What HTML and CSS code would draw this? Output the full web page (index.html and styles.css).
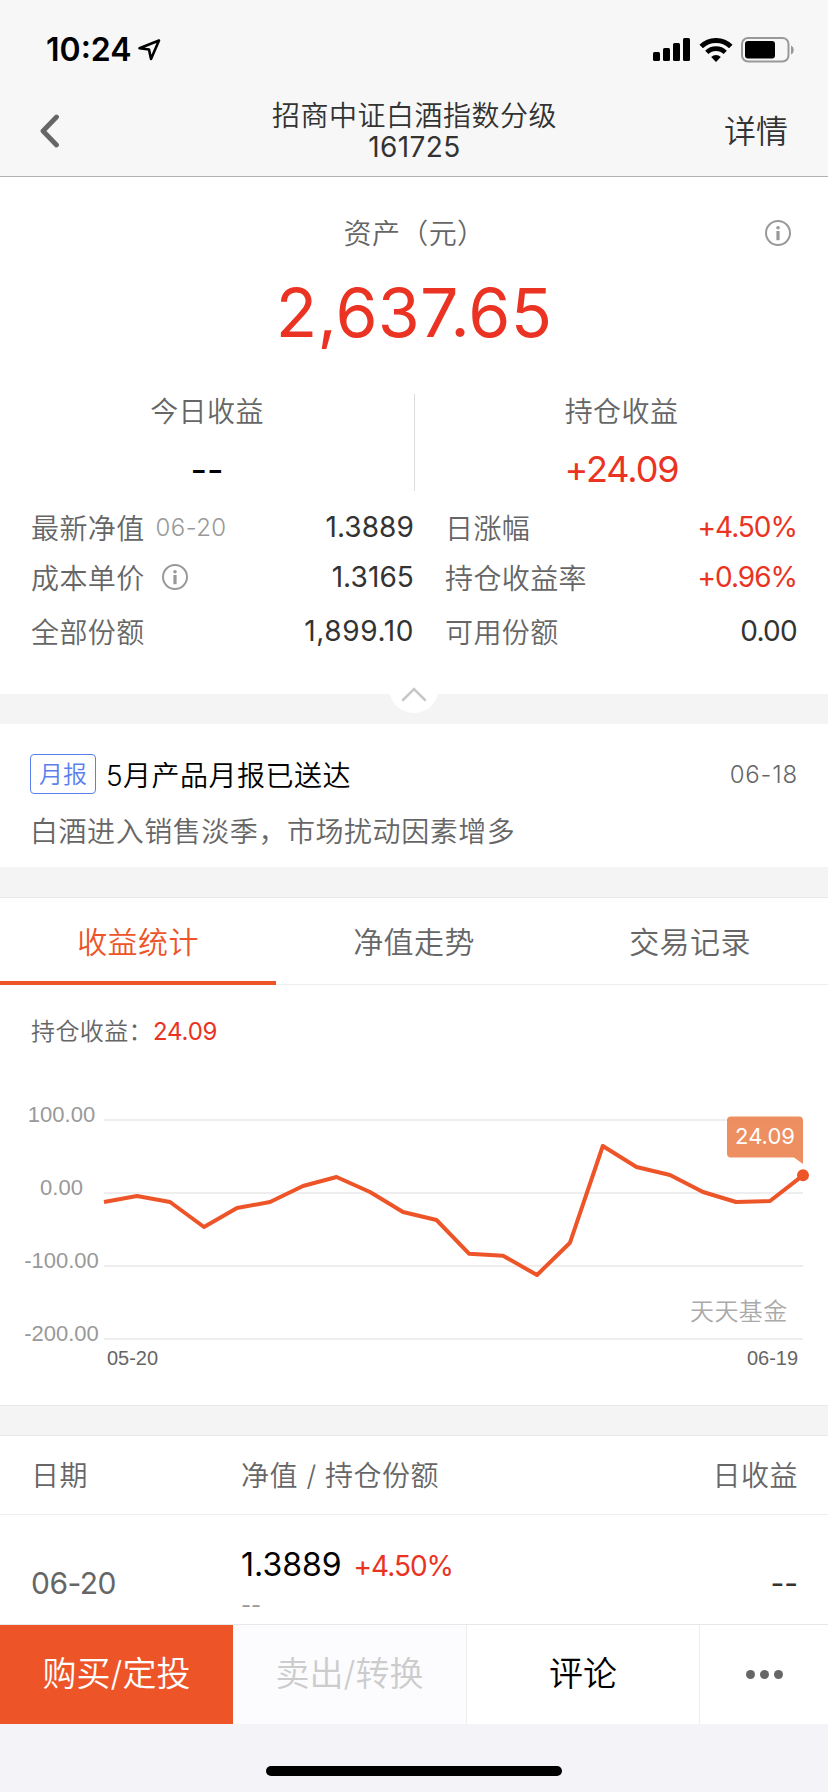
FILE: index.html
```html
<!DOCTYPE html>
<html lang="zh-CN">
<head>
    <meta charset="UTF-8">
    <meta name="viewport" content="width=device-width, initial-scale=1.0">
    <title>招商中证白酒指数分级</title>
    <link rel="stylesheet" href="styles.css">
</head>
<body>
    <div id="status-bar">
        <div class="time">10:24</div>
        <svg class="location" width="24" height="24" viewBox="0 0 24 24">
            <path d="M22 2.5 L2.5 10.2 L12 11.5 L14 21 Z" fill="none" stroke="#000" stroke-width="2.6" stroke-linejoin="round"/>
        </svg>
        <div class="status-icons">
            <svg width="37" height="24" viewBox="0 0 37 24">
                <rect x="0" y="14" width="7" height="9" rx="1.5"/>
                <rect x="10" y="10" width="7" height="13" rx="1.5"/>
                <rect x="20" y="5" width="7" height="18" rx="1.5"/>
                <rect x="30" y="0" width="7" height="23" rx="1.5"/>
            </svg>
            <svg class="wifi" width="34" height="24" viewBox="0 0 34 24">
                <path d="M2.2 8.6 A21 21 0 0 1 31.8 8.6" fill="none" stroke="#000" stroke-width="5"/>
                <path d="M7.8 14.4 A13 13 0 0 1 26.2 14.4" fill="none" stroke="#000" stroke-width="4.6"/>
                <path d="M12.2 19 A6.8 6.8 0 0 1 21.8 19 L17 24 Z"/>
            </svg>
            <svg class="battery" width="54" height="26" viewBox="0 0 54 26">
                <rect x="1" y="1" width="46.5" height="23.5" rx="6" fill="none" stroke="#999" stroke-width="2"/>
                <rect x="4" y="4" width="30" height="17.5" rx="3"/>
                <path d="M50 8.5 A5 5 0 0 1 50 17.5 Z" fill="#999"/>
            </svg>
        </div>
    </div>

    <div id="header">
        <svg class="back" width="20" height="36" viewBox="0 0 20 36">
            <path d="M16.5 4 L3 18 L16.5 32" fill="none" stroke="#666" stroke-width="4.8" stroke-linecap="round" stroke-linejoin="round"/>
        </svg>
        <div class="title">
            <div class="fund-name">招商中证白酒指数分级</div>
            <div class="fund-code">161725</div>
        </div>
        <div class="detail">详情</div>
    </div>

    <div id="assets">
        <div class="assets-label">资产（元）
            <svg class="info" width="26" height="26" viewBox="0 0 26 26">
                <circle cx="13" cy="13" r="12" fill="none" stroke="#999" stroke-width="2"/>
                <circle cx="13" cy="7.8" r="1.8" fill="#999"/>
                <rect x="11.4" y="11" width="3.2" height="9.2" fill="#999"/>
            </svg>
        </div>
        <div class="assets-total">2,637.65</div>
        <div class="profit">
            <div class="profit-item">
                <div class="profit-label">今日收益</div>
                <div class="profit-value dash">--</div>
            </div>
            <div class="profit-item">
                <div class="profit-label">持仓收益</div>
                <div class="profit-value red">+24.09</div>
            </div>
        </div>
        <div class="info-grid">
            <div class="cell"><span>最新净值</span><span class="date">06-20</span><b>1.3889</b></div>
            <div class="cell"><span>日涨幅</span><b class="red rate">+4.50%</b></div>
            <div class="cell"><span>成本单价</span>
                <svg class="cost-info" width="26" height="26" viewBox="0 0 26 26">
                    <circle cx="13" cy="13" r="12" fill="none" stroke="#999" stroke-width="2"/>
                    <circle cx="13" cy="7.8" r="1.8" fill="#999"/>
                    <rect x="11.4" y="11" width="3.2" height="9.2" fill="#999"/>
                </svg>
                <b>1.3165</b></div>
            <div class="cell"><span>持仓收益率</span><b class="red rate">+0.96%</b></div>
            <div class="cell"><span>全部份额</span><b class="total-share">1,899.10</b></div>
            <div class="cell"><span>可用份额</span><b class="free-share">0.00</b></div>
        </div>
        <div class="fold">
            <svg width="28" height="16" viewBox="0 0 28 16">
                <path d="M3 14 L14 3 L25 14" fill="none" stroke="#c8c8c8" stroke-width="2.6" stroke-linecap="round"/>
            </svg>
        </div>
    </div>

    <div id="report">
        <div class="report-head">
            <div class="tag">月报</div>
            <div class="report-title">5月产品月报已送达</div>
            <div class="report-date">06-18</div>
        </div>
        <div class="report-text">白酒进入销售淡季，市场扰动因素增多</div>
    </div>

    <div id="tabs">
        <div class="tab active">收益统计</div>
        <div class="tab">净值走势</div>
        <div class="tab">交易记录</div>
    </div>

    <div id="chart">
        <div class="chart-title">持仓收益：<span class="red">24.09</span></div>
        <svg width="828" height="300" viewBox="0 1080 828 300">
            <g stroke="#eeeeee" stroke-width="2">
                <path d="M104 1120 H803"/>
                <path d="M104 1193 H803"/>
                <path d="M104 1266 H803"/>
                <path d="M104 1339 H803"/>
            </g>
            <g class="axis-y">
                <text x="61.5" y="1121.5">100.00</text>
                <text x="61.5" y="1194.5">0.00</text>
                <text x="61.5" y="1267.5">-100.00</text>
                <text x="61.5" y="1340.5">-200.00</text>
            </g>
            <g class="axis-x">
                <text x="132.5" y="1364.5">05-20</text>
                <text x="772.5" y="1364.5">06-19</text>
            </g>
            <text class="watermark" x="690" y="1320">天天基金</text>
            <polyline fill="none" stroke="#ed5529" stroke-width="4" stroke-linejoin="round"
                points="104,1202 137,1196 170,1202 204,1227 237,1208 270,1202 303,1186 336.5,1177 370,1192 403,1212 436.5,1220 469,1253.7 503,1255.7 537,1275 570,1242.7 602.8,1146 636.5,1167 670,1175 703,1192 736,1202 770,1201 803,1175.3"/>
            <circle cx="803" cy="1175.3" r="6" fill="#ed5529"/>
            <path d="M731 1116.5 H799 Q803 1116.5 803 1120.5 V1164 L794 1157.5 H731 Q727 1157.5 727 1153.5 V1120.5 Q727 1116.5 731 1116.5 Z" fill="#ec804b" fill-opacity="0.88"/>
            <text class="tip" x="765" y="1143.5">24.09</text>
        </svg>
    </div>

    <div id="records">
        <div class="record-head">
            <div class="col-date">日期</div>
            <div class="col-value">净值 / 持仓份额</div>
            <div class="col-profit">日收益</div>
        </div>
        <div class="record">
            <div class="col-date">06-20</div>
            <div class="col-value">
                <div class="net">1.3889<span class="red rate">+4.50%</span></div>
                <div class="share">--</div>
            </div>
            <div class="col-profit">--</div>
        </div>
    </div>

    <div id="actions">
        <div class="action buy">购买/定投</div>
        <div class="action sell">卖出/转换</div>
        <div class="action comment">评论</div>
        <div class="action more"><i></i><i></i><i></i></div>
    </div>
    <div id="home-area"><div class="home-bar"></div></div>
</body>
</html>
```

FILE: styles.css
```css
* {
    box-sizing: border-box;
}

body {
    margin: 0;
    width: 828px;
    height: 1792px;
    overflow: hidden;
    background-color: #f4f4f4;
    font-family: Inter, "Noto Sans CJK SC", sans-serif;
    font-size: 28px;
    font-weight: 350;
    color: #666;
    white-space: nowrap;
}

svg {
    display: block;
}

.red {
    color: #ea3323 !important;
}

#status-bar {
    height: 98px;
    padding: 1px 33px 0 46px;
    display: flex;
    align-items: center;
    background-color: #f7f7f7;
}

.time {
    font-size: 32px;
    font-weight: 600;
    color: #000;
}

.location {
    margin-left: 5px;
}

.status-icons {
    margin-left: auto;
    display: flex;
    align-items: center;
}

.wifi {
    margin-left: 9px;
}

.battery {
    margin-left: 8px;
}

#header {
    height: 79px;
    padding: 0 40px 0 40px;
    display: flex;
    justify-content: space-between;
    background-color: #f7f7f7;
    border-bottom: 1px solid #b2b2b2;
    color: #333;
}

.back {
    margin-top: 15px;
    margin-right: 45px;
}

.title {
    text-align: center;
    line-height: 32px;
}

.fund-name {
    letter-spacing: 0.5px;
    margin-top: 2px;
}

.fund-code {
    margin-top: -1px;
    letter-spacing: 0.4px;
    font-weight: 400;
}

.detail {
    font-size: 32px;
    line-height: 68px;
}

#assets {
    position: relative;
    height: 517px;
    background-color: #fff;
}

.assets-label {
    position: relative;
    padding: 37px 0 0 1px;
    line-height: 40px;
    text-align: center;
    letter-spacing: 0.4px;
}

.info {
    position: absolute;
    top: 43px;
    right: 37px;
}

.assets-total {
    margin-top: 18px;
    line-height: 80px;
    font-size: 68px;
    font-weight: 400;
    text-align: center;
    letter-spacing: 0.2px;
    color: #ea3323;
}

.profit {
    margin-top: 42px;
    height: 97px;
    display: flex;
    text-align: center;
}

.profit-item {
    width: 414px;
}

.profit-item + .profit-item {
    border-left: 1px solid #ddd;
}

.profit-label {
    line-height: 36px;
    letter-spacing: 0.4px;
}

.profit-value {
    margin-top: 19px;
    line-height: 40px;
    font-size: 36px;
    font-weight: 400;
    letter-spacing: -1.1px;
    color: #000;
}

.profit-value.dash {
    padding-top: 1px;
    letter-spacing: 0;
}

.info-grid {
    display: grid;
    grid-template-columns: 383px 352px;
    grid-template-rows: 50px 50px 58px;
    column-gap: 31px;
    padding: 11px 31px 0;
}

.cell {
    display: flex;
    align-items: center;
    letter-spacing: 0.4px;
}

.cell b {
    margin-left: auto;
    font-weight: 400;
    letter-spacing: 0.1px;
    color: #333;
}

.cell .rate {
    letter-spacing: -1px;
}

.cell .total-share {
    letter-spacing: 0.6px;
}

.cell .free-share {
    letter-spacing: -0.7px;
}

.date {
    margin-left: 11px;
    font-size: 24px;
    color: #999;
}

.cost-info {
    margin-left: 17px;
}

/* white semicircle hanging below the panel */
.fold {
    position: absolute;
    left: 389px;
    bottom: -19px;
    width: 50px;
    height: 50px;
    border-radius: 25px;
    background-color: #fff;
    display: flex;
    justify-content: center;
    padding-top: 23px;
}

#report {
    margin-top: 30px;
    height: 143px;
    padding: 30px 30px 0;
    background-color: #fff;
}

.report-head {
    display: flex;
    align-items: center;
    height: 40px;
}

.tag {
    width: 66px;
    height: 40px;
    line-height: 40px;
    border: 1px solid #5c7ff0;
    border-radius: 4px;
    text-align: center;
    font-size: 24px;
    color: #5c7ff0;
}

.report-title {
    margin-left: 10px;
    color: #000;
    letter-spacing: 0.5px;
}

.report-date {
    margin-left: auto;
    font-size: 24px;
    letter-spacing: 0.8px;
}

.report-text {
    margin-top: 18px;
    line-height: 40px;
    letter-spacing: 0.55px;
}

#tabs {
    margin-top: 30px;
    height: 88px;
    display: flex;
    background-color: #fff;
    border-top: 1px solid #e8e8e8;
    border-bottom: 1px solid #eee;
}

.tab {
    width: 276px;
    height: 87px;
    line-height: 88px;
    text-align: center;
    font-size: 30px;
    letter-spacing: 0.4px;
}

.tab.active {
    color: #ed5529;
    border-bottom: 4px solid #ed5529;
}

#chart {
    height: 421px;
    background-color: #fff;
    border-bottom: 1px solid #e8e8e8;
}

.chart-title {
    padding: 27px 31px 0;
    height: 95px;
    line-height: 40px;
    font-size: 24px;
    letter-spacing: 0.4px;
}

.chart-title .red {
    font-weight: 400;
    letter-spacing: -0.2px;
}

.axis-y {
    font-family: "Liberation Sans", sans-serif;
    font-size: 22px;
    font-weight: 400;
    text-anchor: middle;
    fill: #999;
}

.axis-x {
    font-family: "Liberation Sans", sans-serif;
    font-size: 20px;
    font-weight: 400;
    text-anchor: middle;
    fill: #666;
}

.watermark {
    font-size: 24px;
    letter-spacing: 0.4px;
    fill: #aaa;
}

.tip {
    font-size: 22px;
    font-weight: 400;
    text-anchor: middle;
    fill: #fff;
}

#records {
    margin-top: 29px;
    height: 190px;
    background-color: #fff;
    border-top: 1px solid #e8e8e8;
    border-bottom: 1px solid #e8e8e8;
}

.record-head {
    height: 79px;
    line-height: 80px;
    padding: 0 30px 0 31px;
    display: flex;
    letter-spacing: 0.5px;
    border-bottom: 1px solid #eee;
}

.col-date {
    width: 210px;
}

.col-profit {
    margin-left: auto;
}

.record {
    padding: 0 30px 0 31px;
    display: flex;
    font-weight: 400;
}

.record .col-date,
.record .col-profit {
    font-size: 30px;
    line-height: 136px;
}

.record .col-date {
    letter-spacing: -0.5px;
}

.record .col-profit {
    color: #333;
}

.net {
    margin-top: 30px;
    font-size: 32px;
    line-height: 40px;
    color: #000;
}

.net .rate {
    margin-left: 12px;
    font-size: 28px;
    letter-spacing: -1px;
}

.share {
    font-size: 22px;
    line-height: 39px;
    color: #999;
}

#actions {
    display: flex;
    height: 99px;
    line-height: 98px;
    font-size: 34px;
    text-align: center;
    background-color: #fff;
}

.action {
    width: 233px;
}

.buy {
    color: #fff;
    background-color: #ed5529;
}

.sell {
    color: #ccc;
    background-color: #fcfcfe;
}

.comment {
    width: 234px;
    color: #000;
    border-left: 1px solid #eee;
    border-right: 1px solid #eee;
}

.more {
    width: 128px;
    display: flex;
    align-items: center;
    justify-content: center;
    gap: 5px;
}

.more i {
    width: 9px;
    height: 9px;
    border-radius: 50%;
    background-color: #666;
}

#home-area {
    height: 68px;
    padding-top: 42px;
    background-color: #f4f3f8;
}

.home-bar {
    width: 296px;
    height: 10px;
    margin: 0 auto;
    border-radius: 5px;
    background-color: #000;
}
```
